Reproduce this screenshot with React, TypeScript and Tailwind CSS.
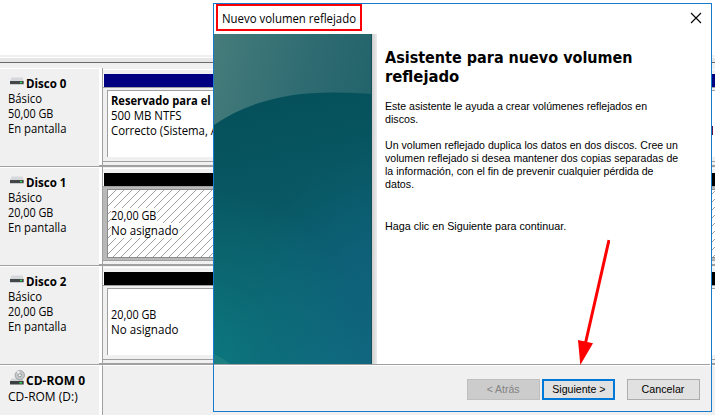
import React from "react";

const ui = "font-['Open_Sans','Noto_Sans',sans-serif]";
const sans = "font-['Liberation_Sans',Arial,sans-serif]";

/** One line of text, condensed horizontally by a scale-x class. */
function Line({ className, children }: { className: string; children: React.ReactNode }) {
  return <span className={`block w-fit origin-left whitespace-nowrap ${className}`}>{children}</span>;
}

function DriveIcon() {
  return (
    <svg width="14" height="9" viewBox="0 0 14 9" className="mt-px shrink-0">
      <path d="M1.5 0.5h11l1.2 3.5H0z" fill="#d5d7da" />
      <path d="M0 4h13.700v3H0z" fill="#44474a" />
      <path d="M0 7h13.700v1H0z" fill="#c9cbcd" />
      <path d="M10 4.700h2v1.600h-2z" fill="#2fe052" />
    </svg>
  );
}

function CdIcon() {
  return (
    <svg width="15" height="15" viewBox="0 0 15 15" className="shrink-0">
      <path d="M1.500 8.500h11l1.200 2.500H0z" fill="#d0d2d5" />
      <circle cx="9.800" cy="5.200" r="4.700" fill="#c4c7c8" stroke="#979b9d" strokeWidth="0.8" />
      <path d="M9.800 5.200L6.500 1.800A4.600 4.600 0 0 1 9.500 .800z" fill="#eef0f0" />
      <circle cx="9.800" cy="5.200" r="1.600" fill="#f3f3f3" stroke="#888c8e" strokeWidth="0.8" />
      <path d="M0 11h13.700v3.500H0z" fill="#3c3f42" />
      <path d="M9.500 12h2.400v1.600H9.500z" fill="#2fe052" />
    </svg>
  );
}

function DiskInfo({ name, size }: { name: string; size: string }) {
  return (
    <div className="h-full w-[99px] shrink-0 border-t border-white pt-[7px] pl-2 text-[12px] leading-[15px]">
      <div className="flex h-[15px] items-start pl-[2px]">
        <DriveIcon />
        <Line className="ml-[2px] scale-x-[0.96] font-bold">{name}</Line>
      </div>
      <Line className="scale-x-[0.94]">Básico</Line>
      <Line className="scale-x-[0.905]">{size}</Line>
      <Line className="scale-x-[0.94]">En pantalla</Line>
    </div>
  );
}

function DiskRow({ name, size, bar, children }: { name: string; size: string; bar: string; children: React.ReactNode }) {
  return (
    <div className="flex h-[99px] shrink-0 border-b border-[#a0a0a0]">
      <DiskInfo name={name} size={size} />
      <div className="w-[3px] shrink-0 border-b border-[#a0a0a0] bg-white" />
      <div className="flex min-w-0 grow flex-col border-b border-l border-[#a0a0a0]">
        <div className="h-[2px] shrink-0 border-b border-white" />
        <div className="h-[4px] shrink-0" />
        <div className="shrink-0 border-l border-white">
          <div className={`h-[13px] ${bar}`} />
        </div>
        <div className="h-[75px] shrink-0 border-y border-[#a0a0a0]">{children}</div>
      </div>
    </div>
  );
}

function Unallocated() {
  return (
    <>
      <Line className="scale-x-[0.905] bg-white pr-px">20,00 GB</Line>
      <Line className="scale-x-[0.965] bg-white pr-px">No asignado</Line>
    </>
  );
}

function Hatch() {
  return (
    <svg className="absolute inset-0 h-full w-full" shapeRendering="crispEdges">
      <defs>
        <pattern id="hatch" width="8" height="8" patternUnits="userSpaceOnUse">
          <path d="M0 7h1v1H0zM1 6h1v1H1zM2 5h1v1H2zM3 4h1v1H3zM4 3h1v1H4zM5 2h1v1H5zM6 1h1v1H6zM7 0h1v1H7z" fill="#a0a0a0" />
        </pattern>
      </defs>
      <rect width="100%" height="100%" fill="url(#hatch)" />
    </svg>
  );
}

function DiskManager() {
  return (
    <div className="flex h-full w-full flex-col">
      <div className="h-[55px] shrink-0 bg-white" />
      <div className="h-[2px] shrink-0 bg-[#f0f0f0]" />
      <div className="h-px shrink-0 bg-white" />
      <div className="h-[4px] shrink-0 bg-[#e6e6e6]" />
      <div className="h-px shrink-0 bg-[#696969]" />
      <div className="h-[5px] shrink-0" />
      <DiskRow name="Disco 0" size="50,00 GB" bar="bg-[#000080]">
        <div className="mt-[2px] ml-1 flex h-[67px] flex-col overflow-hidden border-t border-l border-[#a0a0a0] bg-white pt-[2px] pl-[3px] text-[12px] leading-[15px]">
          <Line className="scale-x-[0.93] font-bold">Reservado para el</Line>
          <Line className="scale-x-[0.955]">500 MB NTFS</Line>
          <div className="flex justify-between">
            <Line className="scale-x-[0.945]">Correcto (Sistema, Activo</Line>
            <span className="mt-[3px] mr-[2px] h-[9px] w-px bg-[#60104a]" />
          </div>
        </div>
      </DiskRow>
      <DiskRow name="Disco 1" size="20,00 GB" bar="bg-black">
        <div className="h-[73px] border-y-[2px] border-l-4 border-[#b8b8b8]">
          <div className="relative h-[69px] border-y border-l border-[#8c8c8c] bg-white">
            <Hatch />
            <div className="relative pt-[18px] pl-[3px] text-[12px] leading-[15px]">
              <Unallocated />
            </div>
          </div>
        </div>
      </DiskRow>
      <DiskRow name="Disco 2" size="20,00 GB" bar="bg-black">
        <div className="mt-[2px] ml-1 h-[67px] border-t border-l border-[#a0a0a0] bg-white pt-[18px] pl-[3px] text-[12px] leading-[15px]">
          <Unallocated />
        </div>
      </DiskRow>
      <div className="flex grow">
        <div className="w-[99px] border-t border-white pt-[4px] pl-2 text-[12px] leading-[15px]">
          <div className="flex h-[16px] items-start pl-[2px]">
            <CdIcon />
            <Line className="ml-px pt-[3px] font-bold">CD-ROM 0</Line>
          </div>
          <Line className="pt-[3px]">CD-ROM (D:)</Line>
        </div>
        <div className="w-[3px] bg-white" />
        <div className="grow border-t border-l border-t-white border-l-[#a0a0a0]" />
      </div>
    </div>
  );
}

function Banner() {
  return (
    <svg width="158" height="330" viewBox="0 0 158 330" className="shrink-0">
      <defs>
        <linearGradient id="sky" x1="0" y1="0" x2="1" y2="0.5">
          <stop offset="0" stopColor="#467c7b" />
          <stop offset="0.5" stopColor="#2f6c72" />
          <stop offset="1" stopColor="#1e6068" />
        </linearGradient>
        <linearGradient id="sea" gradientUnits="userSpaceOnUse" x1="50" y1="60" x2="110" y2="330">
          <stop offset="0" stopColor="#05505a" />
          <stop offset="0.4" stopColor="#085863" />
          <stop offset="1" stopColor="#10687e" />
        </linearGradient>
        <radialGradient id="green" gradientUnits="userSpaceOnUse" cx="-20" cy="320" r="170">
          <stop offset="0" stopColor="#0b7b80" stopOpacity="0.9" />
          <stop offset="0.5" stopColor="#0b7578" stopOpacity="0.4" />
          <stop offset="1" stopColor="#0b7b80" stopOpacity="0" />
        </radialGradient>
        <radialGradient id="blue" gradientUnits="userSpaceOnUse" cx="185" cy="240" r="140">
          <stop offset="0" stopColor="#0f6280" stopOpacity="0.7" />
          <stop offset="1" stopColor="#0f6280" stopOpacity="0" />
        </radialGradient>
      </defs>
      <rect width="158" height="330" fill="url(#sky)" />
      <path d="M0 91C34 67 77 58 121 58.500Q140 58.500 158 60V330H0z" fill="url(#sea)" />
      <path d="M0 91C34 67 77 58 121 58.500Q140 58.500 158 60V330H0z" fill="url(#blue)" />
      <path d="M0 91C34 67 77 58 121 58.500Q140 58.500 158 60V330H0z" fill="url(#green)" />
      <path d="M0 320Q9 324 16 330H0z" fill="#1d7f82" />
      <path d="M157.500 0V330" stroke="#174f5b" />
    </svg>
  );
}

function Wizard() {
  return (
    <div className="absolute top-[3px] left-[213px] flex h-[409px] w-[499px] flex-col border border-[#1979ca] bg-white">
      <div className="flex h-[30px] shrink-0 items-start justify-between">
        <div className={`ml-[2px] h-[27px] w-[146px] border-2 border-[#fb0007] pl-[4px] text-[12px] leading-[25px] ${ui}`}>
          <Line className="scale-x-[0.95]">Nuevo volumen reflejado</Line>
        </div>
        <svg width="12" height="12" viewBox="0 0 12 12" className="mt-[8px] mr-[9px]">
          <path d="M1 1L11 11M11 1L1 11" stroke="#000" strokeWidth="1.1" />
        </svg>
      </div>
      <div className={`flex h-[330px] shrink-0 text-[11.5px] leading-[13px] ${sans}`}>
        <Banner />
        <div className="w-[5px] shrink-0 bg-linear-to-r from-[#cfcfcf] to-[#ececec]" />
        <div className="pt-[14px] pl-2">
          <h1 className="font-['DejaVu_Sans_Condensed','DejaVu_Sans',sans-serif] text-[16px] leading-[19px] font-bold [font-stretch:condensed]">
            <Line className="">Asistente para nuevo volumen</Line>
            <Line className="scale-x-[1.03]">reflejado</Line>
          </h1>
          <p className="mt-[14px]">
            <Line className="scale-x-[0.917]">Este asistente le ayuda a crear volúmenes reflejados en</Line>
            <Line className="scale-x-[0.93]">discos.</Line>
          </p>
          <p className="mt-[13px]">
            <Line className="scale-x-[0.92]">Un volumen reflejado duplica los datos en dos discos. Cree un</Line>
            <Line className="scale-x-[0.917]">volumen reflejado si desea mantener dos copias separadas de</Line>
            <Line className="scale-x-[0.919]">la información, con el fin de prevenir cualquier pérdida de</Line>
            <Line className="scale-x-[0.93]">datos.</Line>
          </p>
          <p className="mt-[29px]">
            <Line className="scale-x-[0.935]">Haga clic en Siguiente para continuar.</Line>
          </p>
        </div>
      </div>
      <div className="mr-px h-px shrink-0 bg-[#a0a0a0]" />
      <div className={`flex grow justify-end border-t border-white bg-[#f0f0f0] pt-[13px] pr-[11px] text-[11.5px] leading-[17px] ${sans}`}>
        <button className="h-[21px] w-[73px] border border-[#bfbfbf] bg-[#cccccc] text-[#838383]">
          <span className="inline-block scale-x-[0.91]">&lt; Atrás</span>
        </button>
        <button className="ml-[2px] h-[21px] w-[73px] border-2 border-[#0078d7] bg-[#e1e1e1]">
          <span className="inline-block scale-x-[0.92]">Siguiente &gt;</span>
        </button>
        <button className="ml-[12px] h-[21px] w-[73px] border border-[#adadad] bg-[#e1e1e1]">
          <span className="inline-block scale-x-[0.93]">Cancelar</span>
        </button>
      </div>
    </div>
  );
}

export default function App() {
  return (
    <div className={`relative h-[415px] w-[715px] overflow-hidden bg-[#f0f0f0] text-black ${ui}`}>
      <DiskManager />
      <Wizard />
      <svg width="40" height="130" viewBox="570 238 40 130" className="absolute top-[238px] left-[570px]">
        <path d="M609 240L585.500 343" stroke="#fe0000" strokeWidth="3" />
        <path d="M578 340L593 343.300L580.300 365z" fill="#fe0000" />
      </svg>
    </div>
  );
}
